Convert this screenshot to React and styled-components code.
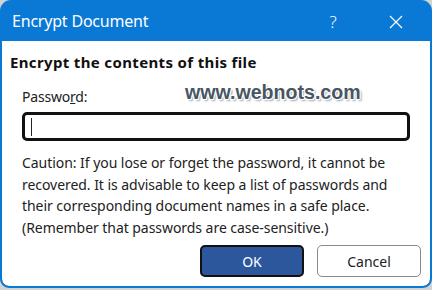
import styled, { createGlobalStyle } from "styled-components";

const GlobalStyle = createGlobalStyle`
  html, body {
    margin: 0;
    padding: 0;
    background: #cfd3d6;
  }
  body {
    font-family: "Noto Sans", "Open Sans", sans-serif;
  }
`;

const Window = styled.div`
  position: relative;
  width: 432px;
  height: 288px;
  box-sizing: border-box;
  border: 2px solid #0a78d5;
  border-radius: 11px 11px 9px 9px;
  background: #0a78d5;
  overflow: hidden;
  display: flex;
  flex-direction: column;
`;

const TitleBar = styled.div`
  height: 39px;
  display: flex;
  align-items: center;
  padding: 0 0 0 10px;
  color: #ffffff;
  flex-shrink: 0;
`;

const Title = styled.div`
  flex: 1;
  font-size: 16px;
  letter-spacing: -0.2px;
  padding-bottom: 2px;
`;

const TitleButton = styled.div`
  width: ${(p) => p.$w}px;
  display: flex;
  justify-content: center;
  align-items: center;
  font-size: 17px;
  font-weight: 300;
  color: #ffffff;
`;

const Body = styled.div`
  flex: 1;
  background: #ffffff;
  border-radius: 0 0 7px 7px;
  padding: 11px 8px 0 8px;
  display: flex;
  flex-direction: column;
`;

const Heading = styled.div`
  font-size: 15px;
  font-weight: 700;
  color: #111111;
  letter-spacing: 0.35px;
  line-height: 20px;
`;

const Section = styled.div`
  padding: 0 0 0 12px;
  display: flex;
  flex-direction: column;
`;

const Label = styled.div`
  margin-top: 15px;
  font-size: 14px;
  color: #222222;
  line-height: 20px;
  letter-spacing: -0.2px;
`;

const Input = styled.div`
  margin-top: 5px;
  width: 388px;
  height: 29px;
  box-sizing: border-box;
  border: 3px solid #111111;
  border-radius: 5px;
  display: flex;
  align-items: center;
  padding-left: 6px;
`;

const Caret = styled.div`
  width: 1px;
  height: 18px;
  background: #222222;
`;

const Caution = styled.p`
  margin: 11px 0 0 0;
  font-size: 14px;
  line-height: 21.6px;
  color: #222222;
  letter-spacing: -0.05px;
  white-space: nowrap;
`;

const Buttons = styled.div`
  margin-top: 7px;
  display: flex;
  justify-content: flex-end;
  gap: 13px;
  padding-right: 1px;
`;

const Button = styled.button`
  width: 104px;
  height: 32px;
  box-sizing: border-box;
  border-radius: 5px;
  font-family: "Noto Sans", "Open Sans", sans-serif;
  font-size: 14px;
  padding: 0;
  border: ${(p) => (p.$primary ? "2px solid #111111" : "1px solid #8a8a8a")};
  background: ${(p) => (p.$primary ? "#2d579c" : "#ffffff")};
  color: ${(p) => (p.$primary ? "#ffffff" : "#222222")};
`;

const Watermark = styled.div`
  position: absolute;
  left: 183px;
  top: 79px;
  font-family: "Liberation Sans", Arial, sans-serif;
  font-weight: 700;
  font-size: 19.6px;
  color: #485663;
  text-shadow: -1px -1px 0 #fff, 1px -1px 0 #fff, -1px 1px 0 #fff,
    1px 1px 0 #fff, 2px 2px 2px #9aa3aa;
`;

export default function App() {
  return (
    <>
      <GlobalStyle />
      <Window>
        <TitleBar>
          <Title>Encrypt Document</Title>
          <TitleButton $w={58}>?</TitleButton>
          <TitleButton $w={68}>
            <svg width="14" height="14" viewBox="0 0 14 14">
              <path
                d="M1 1 L13 13 M13 1 L1 13"
                stroke="#ffffff"
                strokeWidth="1.2"
                fill="none"
              />
            </svg>
          </TitleButton>
        </TitleBar>
        <Body>
          <Heading>Encrypt the contents of this file</Heading>
          <Section>
            <Label>
              Passwo<u>r</u>d:
            </Label>
            <Input>
              <Caret />
            </Input>
            <Caution>
              Caution: If you lose or forget the password, it cannot be
              <br />
              recovered. It is advisable to keep a list of passwords and
              <br />
              their corresponding document names in a safe place.
              <br />
              (Remember that passwords are case-sensitive.)
            </Caution>
          </Section>
          <Buttons>
            <Button $primary>OK</Button>
            <Button>Cancel</Button>
          </Buttons>
        </Body>
        <Watermark>www.webnots.com</Watermark>
      </Window>
    </>
  );
}
